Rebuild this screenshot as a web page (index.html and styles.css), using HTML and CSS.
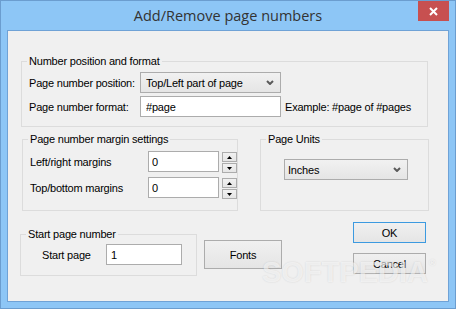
FILE: index.html
```html
<!DOCTYPE html>
<html>
<head>
<meta charset="utf-8">
<title>Add/Remove page numbers</title>
<link rel="stylesheet" href="styles.css">
</head>
<body>
<div class="window">
  <div class="titlebar">
    <span class="title">Add/Remove page numbers</span>
    <button class="close" aria-label="Close">
      <svg width="9" height="9" viewBox="0 0 9 9"><path d="M1 1L8 8M8 1L1 8" stroke="#fff" stroke-width="2" fill="none"/></svg>
    </button>
  </div>
  <div class="panel">
    <fieldset class="group g-format">
      <legend>Number position and format</legend>
      <div class="fmt-grid">
        <span class="lbl">Page number position:</span>
        <div class="combo w-pos"><span>Top/Left part of page</span><svg class="chev" width="8" height="5" viewBox="0 0 8 5"><path d="M1 1L4 4L7 1" stroke="#5a5a5a" stroke-width="2" fill="none"/></svg></div>
        <span></span>
        <span class="lbl">Page number format:</span>
        <input class="textbox" type="text" value="#page">
        <span class="example">Example: #page of #pages</span>
      </div>
    </fieldset>

    <div class="row-mid">
      <fieldset class="group g-margin">
        <legend>Page number margin settings</legend>
        <div class="spin-grid">
          <span class="lbl">Left/right margins</span>
          <input class="textbox num" type="text" value="0">
          <div class="spinner">
            <button class="spin"><svg width="5" height="3" viewBox="0 0 5 3"><path d="M0 3L2.5 0L5 3Z" fill="#000"/></svg></button>
            <button class="spin"><svg width="5" height="3" viewBox="0 0 5 3"><path d="M0 0L5 0L2.5 3Z" fill="#000"/></svg></button>
          </div>
          <span class="lbl">Top/bottom margins</span>
          <input class="textbox num" type="text" value="0">
          <div class="spinner">
            <button class="spin"><svg width="5" height="3" viewBox="0 0 5 3"><path d="M0 3L2.5 0L5 3Z" fill="#000"/></svg></button>
            <button class="spin"><svg width="5" height="3" viewBox="0 0 5 3"><path d="M0 0L5 0L2.5 3Z" fill="#000"/></svg></button>
          </div>
        </div>
      </fieldset>
      <fieldset class="group g-units">
        <legend>Page Units</legend>
        <div class="combo w-units"><span>Inches</span><svg class="chev" width="8" height="5" viewBox="0 0 8 5"><path d="M1 1L4 4L7 1" stroke="#5a5a5a" stroke-width="2" fill="none"/></svg></div>
      </fieldset>
    </div>

    <div class="row-bottom">
      <fieldset class="group g-start">
        <legend>Start page number</legend>
        <div class="start-row">
          <span class="lbl start-lbl">Start page</span>
          <input class="textbox start" type="text" value="1">
        </div>
      </fieldset>
      <button class="btn btn-fonts">Fonts</button>
      <div class="btn-col">
        <button class="btn btn-ok">OK</button>
        <button class="btn">Cancel</button>
      </div>
    </div>

    <div class="watermark">SOFTPEDIA<span class="reg">®</span></div>
  </div>
</div>
</body>
</html>
```

FILE: styles.css
```css
body {
  margin: 0;
}

.window {
  position: relative;
  width: 456px;
  height: 309px;
  box-sizing: border-box;
  border: 1px solid #6b9dcf;
  background: #8dc6f6;
  display: flex;
  flex-direction: column;
  font-family: "Liberation Sans", Arial, sans-serif;
}

.titlebar {
  flex: none;
  height: 29px;
  display: flex;
  align-items: center;
  justify-content: center;
}

.title {
  font-family: "Open Sans", "Noto Sans", sans-serif;
  font-size: 14.5px;
  color: #333;
  line-height: 20px;
  margin-top: 1px;
}

.close {
  position: absolute;
  top: 0;
  right: 6px;
  width: 31px;
  height: 20px;
  border: 0;
  padding: 0;
  background: #c75050;
  display: flex;
  align-items: center;
  justify-content: center;
}

.panel {
  position: relative;
  flex: none;
  height: 272px;
  margin: 0 6px 6px 6px;
  box-sizing: border-box;
  border: 1px solid #6fa2d6;
  background: #f0f0f0;
  font-size: 11px;
  letter-spacing: -0.2px;
  color: #000;
  overflow: hidden;
}

.group {
  margin: 0;
  padding: 0;
  border: 1px solid #dcdcdc;
  min-width: 0;
  box-sizing: border-box;
}

.group legend {
  padding: 0 2px;
  font-size: 11px;
  line-height: 13px;
}

.lbl {
  white-space: nowrap;
}

.g-format {
  margin: 24px 0 0 13px;
  width: 407px;
  padding: 4px 0 9px 7px;
}

.g-format legend {
  margin-left: -2px;
}

.fmt-grid {
  display: grid;
  grid-template-columns: 111px 141px auto;
  grid-auto-rows: 21px;
  row-gap: 3px;
  align-items: center;
}

.combo {
  height: 21px;
  box-sizing: border-box;
  border: 1px solid #acacac;
  background: linear-gradient(#f1f1f1, #e5e5e5);
  display: flex;
  align-items: center;
  justify-content: space-between;
  padding: 0 6px 0 5px;
  white-space: nowrap;
}

.w-pos {
  width: 141px;
}

.textbox {
  height: 21px;
  box-sizing: border-box;
  margin: 0;
  border: 1px solid #acacac;
  background: #fff;
  padding: 0 0 0 5px;
  font: inherit;
  letter-spacing: inherit;
  color: #000;
  outline: none;
  width: 141px;
}

.example {
  margin-left: 4px;
  white-space: nowrap;
}

.row-mid {
  display: flex;
  margin-top: 6px;
}

.g-margin {
  margin-left: 14px;
  width: 216px;
  padding: 5px 0 12px 7px;
}

.g-margin legend {
  margin-left: -2px;
}

.spin-grid {
  display: grid;
  grid-template-columns: 115px 71px 15px;
  grid-auto-rows: 21px;
  column-gap: 3px;
  row-gap: 5px;
  align-items: center;
}

.textbox.num {
  width: 71px;
  padding-left: 3px;
}

.spinner {
  align-self: start;
  margin-top: 1px;
  display: flex;
  flex-direction: column;
  gap: 1px;
}

.spin {
  width: 15px;
  height: 10px;
  box-sizing: border-box;
  border: 1px solid #acacac;
  background: linear-gradient(#f1f1f1, #e5e5e5);
  padding: 0;
  display: flex;
  align-items: center;
  justify-content: center;
}

.g-units {
  margin-left: 22px;
  width: 169px;
  padding: 13px 0 0 23px;
}

.g-units legend {
  margin-left: -18px;
}

.w-units {
  width: 124px;
  padding-left: 3px;
}

.row-bottom {
  display: flex;
  align-items: flex-start;
}

.g-start {
  margin: 17px 0 0 12px;
  width: 177px;
  padding: 3px 0 10px 21px;
}

.g-start legend {
  margin-left: -16px;
}

.start-row {
  display: flex;
  align-items: center;
  height: 21px;
}

.start-lbl {
  width: 64px;
}

.textbox.start {
  width: 76px;
  padding-left: 4px;
}

.btn {
  width: 73px;
  height: 21px;
  box-sizing: border-box;
  border: 1px solid #acacac;
  background: linear-gradient(#f0f0f0, #e5e5e5);
  padding: 0;
  font: inherit;
  letter-spacing: inherit;
  color: #000;
}

.btn-fonts {
  margin: 29px 0 0 7px;
  width: 78px;
  height: 29px;
}

.btn-col {
  margin: 11px 0 0 71px;
  display: flex;
  flex-direction: column;
  gap: 10px;
}

.btn-ok {
  border-color: #3c9ae0;
}

.watermark {
  position: absolute;
  left: 254px;
  top: 216px;
  font-family: "Liberation Sans", Arial, sans-serif;
  font-weight: bold;
  font-size: 29px;
  line-height: 32px;
  letter-spacing: 0;
  color: rgba(255, 255, 255, 0.6);
  text-shadow: 0 0 2px rgba(0, 0, 0, 0.12);
  pointer-events: none;
}

.watermark .reg {
  font-size: 9px;
  vertical-align: 16px;
  margin-left: 1px;
}
```
